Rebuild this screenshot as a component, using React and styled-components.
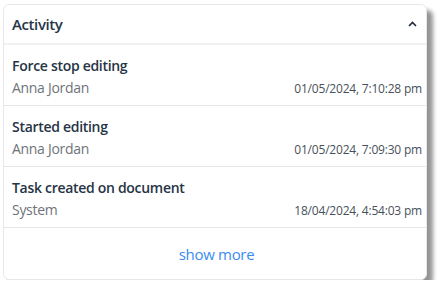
import React from "react";
import styled, { createGlobalStyle } from "styled-components";

const GlobalStyle = createGlobalStyle`
  body {
    margin: 0;
    background: #ffffff;
    font-family: "Open Sans", "Liberation Sans", sans-serif;
  }
`;

const Page = styled.div`
  padding: 4px 0 0 3px;
`;

const Card = styled.div`
  width: 424px;
  box-sizing: border-box;
  border: 1px solid #e6e8eb;
  border-radius: 6px;
  background: #fff;
  box-shadow: 6px 6px 4px rgba(0, 0, 0, 0.42);
  display: flex;
  flex-direction: column;
`;

const Header = styled.div`
  height: 38px;
  display: flex;
  align-items: center;
  justify-content: space-between;
  padding: 0 9px 0 8px;
  border-bottom: 2px solid #f0f1f3;
`;

const Title = styled.h2`
  margin: 0;
  font-size: 15px;
  font-weight: 600;
  color: #253447;
  letter-spacing: -0.4px;
`;

const Row = styled.div`
  height: 61px;
  box-sizing: border-box;
  padding: 11px 4px 0 8px;
  border-bottom: 1px solid #e4e6e9;
  display: flex;
  flex-direction: column;
  gap: 2px;
`;

const EventName = styled.div`
  font-size: 14px;
  font-weight: 600;
  color: #263445;
  letter-spacing: -0.3px;
  line-height: 20px;
`;

const Meta = styled.div`
  display: flex;
  justify-content: space-between;
  align-items: baseline;
  line-height: 20px;
`;

const Actor = styled.span`
  font-size: 14px;
  color: #6e747a;
  letter-spacing: -0.3px;
`;

const Stamp = styled.span`
  font-size: 12px;
  color: #48515b;
  letter-spacing: -0.2px;
`;

const Footer = styled.div`
  height: 51px;
  display: flex;
  align-items: center;
  justify-content: center;
`;

const MoreLink = styled.a`
  font-size: 15px;
  color: #3a8bf2;
  text-decoration: none;
  letter-spacing: -0.3px;
  cursor: pointer;
  margin-left: 3px;
`;

const events = [
  { name: "Force stop editing", who: "Anna Jordan", when: "01/05/2024, 7:10:28 pm" },
  { name: "Started editing", who: "Anna Jordan", when: "01/05/2024, 7:09:30 pm" },
  { name: "Task created on document", who: "System", when: "18/04/2024, 4:54:03 pm" },
];

function Caret() {
  return (
    <svg width="9" height="6" viewBox="0 0 9 6">
      <polyline points="1,5 4.5,1.5 8,5" fill="none" stroke="#1f2a37" strokeWidth="1.6" />
    </svg>
  );
}

export default function App() {
  return (
    <>
      <GlobalStyle />
      <Page>
        <Card>
          <Header>
            <Title>Activity</Title>
            <Caret />
          </Header>
          {events.map((e) => (
            <Row key={e.when}>
              <EventName>{e.name}</EventName>
              <Meta>
                <Actor>{e.who}</Actor>
                <Stamp>{e.when}</Stamp>
              </Meta>
            </Row>
          ))}
          <Footer>
            <MoreLink>show more</MoreLink>
          </Footer>
        </Card>
      </Page>
    </>
  );
}
